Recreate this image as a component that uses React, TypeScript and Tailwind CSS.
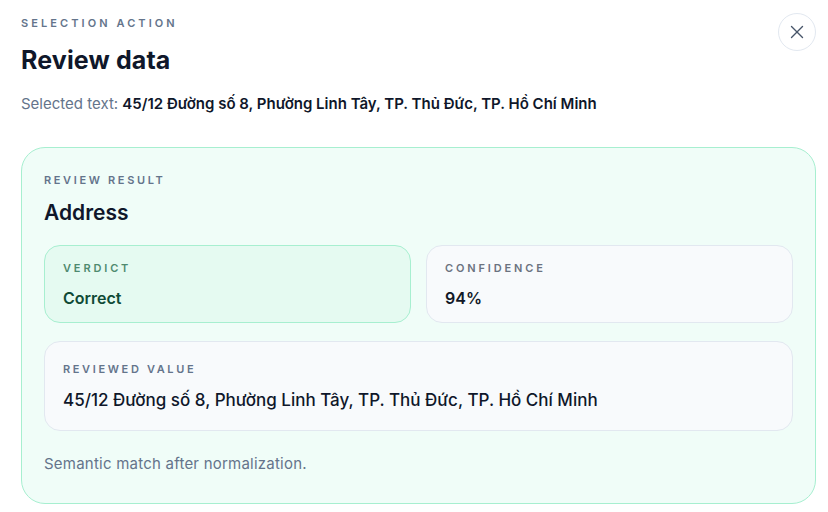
import { X } from 'lucide-react';

function Stat({ label, value, tone }: { label: string; value: string; tone: 'green' | 'gray' }) {
  const box =
    tone === 'green'
      ? 'border-[#a7efd0] bg-[#e5faf1]'
      : 'border-[#e2e8f0] bg-[#f8fafc]';
  const labelColor = tone === 'green' ? 'text-[#4f8a6f]' : 'text-[#6b7280]';
  const valueColor = tone === 'green' ? 'text-[#0f4a36]' : 'text-[#111827]';
  return (
    <div className={`flex h-[78px] flex-col rounded-[16px] border px-[18px] pt-[14px] ${box}`}>
      <div className={`text-[11px] font-semibold uppercase leading-4 tracking-[0.26em] ${labelColor}`}>
        {label}
      </div>
      <div className={`mt-[12px] text-[16px] font-semibold leading-5 ${valueColor}`}>{value}</div>
    </div>
  );
}

export default function App() {
  const address = '45/12 Đường số 8, Phường Linh Tây, TP. Thủ Đức, TP. Hồ Chí Minh';

  return (
    <div className="h-[512px] w-[828px] bg-white pl-[21px] pr-[12px] pt-[15px] font-['Inter',sans-serif] text-[#0f172a]">
      <div className="flex items-start justify-between">
        <div>
          <div className="text-[11px] font-semibold leading-4 tracking-[0.28em] text-[#64748b]">
            SELECTION ACTION
          </div>
          <h1 className="mt-[13px] text-[25px] font-bold leading-8 tracking-[0.005em]">Review data</h1>
        </div>
        <button
          type="button"
          className="mt-[-2px] flex h-[38px] w-[38px] items-center justify-center rounded-full border border-[#e2e8f0] text-[#475569]"
        >
          <X size={22} strokeWidth={1.5} />
        </button>
      </div>

      <p className="mt-[18px] text-[15px] leading-5 text-[#64748b]">
        Selected text: <span className="font-semibold text-[#0f172a]">{address}</span>
      </p>

      <div className="mt-[33px] rounded-[24px] border border-[#a7efd0] bg-[#f0fdf8] px-[22px] pb-[29px] pt-[24px]">
        <div className="text-[11px] font-semibold leading-4 tracking-[0.24em] text-[#64748b]">REVIEW RESULT</div>
        <div className="mt-[11px] text-[21px] font-semibold leading-7 text-[#0f172a]">Address</div>

        <div className="mt-[18px] grid grid-cols-2 gap-[15px]">
          <Stat label="Verdict" value="Correct" tone="green" />
          <Stat label="Confidence" value="94%" tone="gray" />
        </div>

        <div className="mt-[18px] flex h-[90px] flex-col rounded-[16px] border border-[#e2e8f0] bg-[#f8fafc] px-[18px] pt-[19px]">
          <div className="text-[11px] font-semibold leading-4 tracking-[0.24em] text-[#64748b]">REVIEWED VALUE</div>
          <div className="mt-[11px] text-[17px] font-medium leading-6 text-[#0f172a]">{address}</div>
        </div>

        <p className="mt-[23px] text-[15px] leading-5 tracking-[0.015em] text-[#64748b]">
          Semantic match after normalization.
        </p>
      </div>
    </div>
  );
}
